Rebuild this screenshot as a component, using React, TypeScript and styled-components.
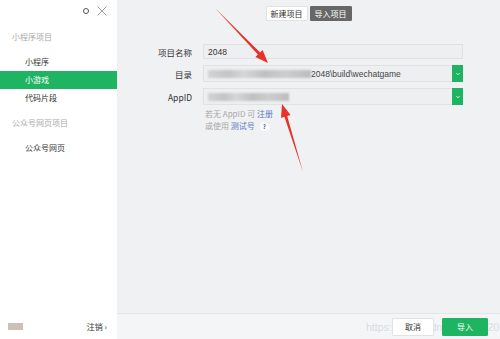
import React from 'react';
import styled, {createGlobalStyle} from 'styled-components';

const GREEN = '#1fb462';
const FONT = '"Noto Sans CJK SC", "Liberation Sans", sans-serif';

const GlobalStyle = createGlobalStyle`
  html, body {
    margin: 0;
    padding: 0;
  }
  body {
    font-family: ${FONT};
    background: #f0f1f3;
  }
`;

const Window = styled.div`
  position: relative;
  display: flex;
  width: 500px;
  height: 339px;
  overflow: hidden;
`;

const Sidebar = styled.aside`
  width: 117px;
  background: #fff;
  display: flex;
  flex-direction: column;
`;

const SideTop = styled.div`
  height: 22px;
  display: flex;
  align-items: center;
  justify-content: flex-end;
  gap: 8px;
  padding-right: 10px;
`;

const Ring = styled.span`
  width: 4px;
  height: 4px;
  border: 1px solid #555;
  border-radius: 50%;
`;

const SectionTitle = styled.div<{first?: boolean}>`
  font-size: 8px;
  line-height: 12px;
  color: #aaa;
  padding: ${p => (p.first ? '9px 0 10px 12px' : '10px 0 10px 12px')};
`;

const NavItem = styled.div<{active?: boolean}>`
  font-size: 8px;
  height: 18px;
  line-height: 18px;
  padding-left: 25px;
  color: ${p => (p.active ? '#fff' : '#333')};
  background: ${p => (p.active ? GREEN : 'transparent')};
`;

const SideFooter = styled.div`
  margin-top: auto;
  height: 26px;
  display: flex;
  align-items: center;
  justify-content: space-between;
  padding: 0 10px 0 8px;
`;

const Avatar = styled.span`
  width: 15px;
  height: 7px;
  background: #cbbfb8;
  filter: blur(0.6px);
`;

const Logout = styled.span`
  font-size: 8px;
  color: #333;
`;

const Main = styled.main`
  flex: 1;
  display: flex;
  flex-direction: column;
`;

const Tabs = styled.div`
  display: flex;
  justify-content: center;
  gap: 2px;
  padding-top: 6px;
`;

const Tab = styled.button<{active?: boolean}>`
  font-family: ${FONT};
  font-size: 8px;
  height: 15px;
  padding: 0 4px;
  border: 1px solid ${p => (p.active ? '#666' : '#e2e2e2')};
  background: ${p => (p.active ? '#676767' : '#fff')};
  color: ${p => (p.active ? '#fff' : '#333')};
  border-radius: 1px;
`;

const Form = styled.div`
  display: grid;
  grid-template-columns: 75px 260px;
  column-gap: 11px;
  row-gap: 6px;
  margin-top: 23px;
  align-items: center;
`;

const Label = styled.label`
  font-size: 8.5px;
  color: #333;
  text-align: right;
`;

const Field = styled.div<{tall?: boolean}>`
  height: ${p => (p.tall ? 17 : 15)}px;
  box-sizing: border-box;
  border: 1px solid #e0e1e3;
  background: #eeeff1;
  display: flex;
  align-items: center;
  font-size: 8.5px;
  color: #333;
  padding-left: 4px;
  font-family: "Liberation Sans", sans-serif;
`;

const Blur = styled.span<{w: number}>`
  width: ${p => p.w}px;
  height: 8px;
  background: linear-gradient(90deg, #d3d3d3, #c4c4c4 20%, #d6d6d6 35%, #c0c0c0 55%, #cdcdcd 75%, #bdbdbd);
  filter: blur(0.8px);
  flex: none;
`;

const Path = styled.span`
  flex: 1;
  color: #444;
`;

const Drop = styled.span`
  width: 11px;
  align-self: stretch;
  margin: -1px -1px -1px 0;
  background: ${GREEN};
  color: #fff;
  display: flex;
  align-items: center;
  justify-content: center;
`;

const Help = styled.div`
  grid-column: 2;
  font-size: 8px;
  line-height: 12px;
  color: #a8a8a8;
  padding-left: 2px;
  margin-top: -3px;
`;

const Link = styled.span`
  color: #5a77c4;
`;

const Q = styled.span`
  display: inline-block;
  width: 9px;
  height: 9px;
  margin-left: 5px;
  border-radius: 50%;
  background: #fff;
  color: #3b5bb5;
  font-size: 6px;
  line-height: 9px;
  text-align: center;
  font-weight: bold;
`;

const Footer = styled.footer`
  position: relative;
  margin-top: auto;
  height: 25px;
  border-top: 1px solid #e4e5e7;
  background: #f4f5f6;
  display: flex;
  align-items: center;
  justify-content: flex-end;
  gap: 8px;
  padding-right: 12px;
`;

const Btn = styled.button<{primary?: boolean}>`
  position: relative;
  z-index: 1;
  font-family: ${FONT};
  font-size: 8px;
  height: 18px;
  width: ${p => (p.primary ? 46 : 42)}px;
  border: 1px solid ${p => (p.primary ? GREEN : '#e2e2e2')};
  background: ${p => (p.primary ? GREEN : '#fff')};
  color: ${p => (p.primary ? '#fff' : '#333')};
  border-radius: 1px;
  padding: 0;
`;

const Watermark = styled.div`
  position: absolute;
  left: 249px;
  top: 7px;
  font-family: "Liberation Sans", sans-serif;
  font-size: 10.5px;
  color: rgba(190, 196, 205, 0.55);
  pointer-events: none;
`;

const Overlay = styled.svg`
  position: absolute;
  left: 0;
  top: 0;
  pointer-events: none;
`;

const Chevron = () => (
  <svg width='6' height='6' viewBox='0 0 6 6'>
    <path d='M1.5 2.2 L3 3.7 L4.5 2.2' fill='none' stroke='#fff' strokeWidth='0.9' />
  </svg>
);

export default function App() {
  return (
    <Window>
      <GlobalStyle />
      <Sidebar>
        <SideTop>
          <Ring />
          <svg width='10' height='10' viewBox='0 0 10 10'>
            <path d='M0.5 0.5 L9.5 9.5 M9.5 0.5 L0.5 9.5' stroke='#888' strokeWidth='0.8' />
          </svg>
        </SideTop>
        <SectionTitle first>小程序项目</SectionTitle>
        <NavItem>小程序</NavItem>
        <NavItem active>小游戏</NavItem>
        <NavItem>代码片段</NavItem>
        <SectionTitle>公众号网页项目</SectionTitle>
        <NavItem>公众号网页</NavItem>
        <SideFooter>
          <Avatar />
          <Logout>注销 ›</Logout>
        </SideFooter>
      </Sidebar>
      <Main>
        <Tabs>
          <Tab>新建项目</Tab>
          <Tab active>导入项目</Tab>
        </Tabs>
        <Form>
          <Label>项目名称</Label>
          <Field>2048</Field>
          <Label>目录</Label>
          <Field tall>
            <Blur w={103} />
            <Path>2048\build\wechatgame</Path>
            <Drop>
              <Chevron />
            </Drop>
          </Field>
          <Label>AppID</Label>
          <Field tall>
            <Blur w={81} />
            <Path />
            <Drop>
              <Chevron />
            </Drop>
          </Field>
          <Help>
            若无 AppID 可 <Link>注册</Link>
            <br />
            或使用 <Link>测试号</Link>
            <Q>?</Q>
          </Help>
        </Form>
        <Footer>
          <Watermark>https://blog.csdn.net/FA0620</Watermark>
          <Btn>取消</Btn>
          <Btn primary>导入</Btn>
        </Footer>
      </Main>
      <Overlay width='500' height='339' viewBox='0 0 500 339'>
        <polygon
          points='215,8 260.1,52.6 262.6,50.1 268,63 255.4,57.1 257.9,54.6'
          fill='#e8312b'
        />
        <polygon
          points='303,172 287.2,116 290.6,114.9 282,104 281,117.9 284.4,116.8'
          fill='#e8312b'
        />
      </Overlay>
    </Window>
  );
}
